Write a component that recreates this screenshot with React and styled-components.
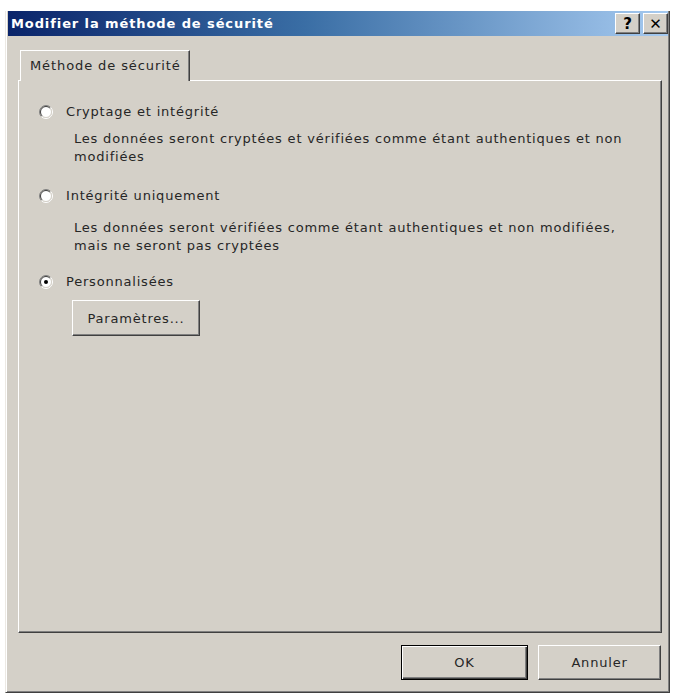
import React from 'react';
import styled, { createGlobalStyle } from 'styled-components';

const Global = createGlobalStyle`
  html, body { margin: 0; padding: 0; background: #ffffff; }
  body { font-family: "DejaVu Sans", "Liberation Sans", sans-serif; }
`;

const Dialog = styled.div`
  margin: 11px 0 0 5px;
  width: 665px;
  height: 682px;
  box-sizing: border-box;
  background: #d4d0c8;
  border-left: 1px solid #ece9e4;
  border-right: 1px solid #404040;
  border-bottom: 1px solid #404040;
  box-shadow: inset 1px 0 #ffffff, inset -1px -1px #808080;
  display: flex;
  flex-direction: column;
  padding: 0 1px 2px 2px;
`;

const TitleBar = styled.div`
  height: 25px;
  flex: none;
  display: flex;
  align-items: center;
  justify-content: space-between;
  padding: 0 0 0 3px;
  background: linear-gradient(90deg, #0a246a 0%, #3a6ea5 45%, #a6caf0 100%);
`;

const Title = styled.span`
  color: #ffffff;
  font-weight: bold;
  font-size: 13px;
  letter-spacing: 0.9px;
`;

const CaptionButtons = styled.div`
  display: flex;
  gap: 3px;
  align-items: center;
`;

const CaptionButton = styled.div`
  width: 25px;
  height: 21px;
  box-sizing: border-box;
  background: #d4d0c8;
  border-top: 1px solid #ffffff;
  border-left: 1px solid #ffffff;
  border-right: 1px solid #404040;
  border-bottom: 1px solid #404040;
  box-shadow: inset -1px -1px #808080;
  display: flex;
  align-items: center;
  justify-content: center;
  font-family: "DejaVu Sans", sans-serif;
  font-weight: bold;
  font-size: 15px;
  color: #000;
`;

const Body = styled.div`
  flex: 1;
  display: flex;
  flex-direction: column;
  padding: 14px 6px 0 10px;
`;

const TabStrip = styled.div`
  height: 30px;
  display: flex;
  align-items: flex-end;
  padding-left: 2px;
  position: relative;
  z-index: 1;
`;

const Tab = styled.div`
  width: 170px;
  height: 31px;
  box-sizing: border-box;
  margin-bottom: -1px;
  background: #d4d0c8;
  border-top: 1px solid #ffffff;
  border-left: 1px solid #ffffff;
  border-right: 1px solid #404040;
  box-shadow: inset -1px 0 #808080;
  padding: 7px 0 0 9px;
  font-size: 13px;
  letter-spacing: 0.9px;
  color: #262626;
`;

const Panel = styled.div`
  height: 553px;
  box-sizing: border-box;
  border-top: 1px solid #ffffff;
  border-left: 1px solid #ffffff;
  border-right: 1px solid #404040;
  border-bottom: 1px solid #404040;
  box-shadow: inset -1px -1px #808080;
  padding: 22px 20px 0 20px;
  display: flex;
  flex-direction: column;
  align-items: flex-start;
`;

const RadioRow = styled.label`
  display: flex;
  align-items: center;
  gap: 13px;
  height: 17px;
  font-size: 13px;
  letter-spacing: 0.8px;
  color: #262626;
  margin-top: ${(p) => p.$mt || 0}px;
`;

const Description = styled.p`
  margin: ${(p) => p.$mt || 0}px 0 0 35px;
  font-size: 13px;
  letter-spacing: 0.8px;
  line-height: 18px;
  color: #262626;
  white-space: nowrap;
`;

const Button = styled.div`
  width: ${(p) => p.$w}px;
  height: ${(p) => p.$h || 35}px;
  box-sizing: border-box;
  background: #d4d0c8;
  border-top: 1px solid ${(p) => (p.$default ? '#000' : '#ffffff')};
  border-left: 1px solid ${(p) => (p.$default ? '#000' : '#ffffff')};
  border-right: 1px solid ${(p) => (p.$default ? '#000' : '#404040')};
  border-bottom: 1px solid ${(p) => (p.$default ? '#000' : '#404040')};
  box-shadow: ${(p) =>
    p.$default
      ? 'inset 1px 1px #ffffff, inset -1px -1px #404040, inset -2px -2px #808080'
      : 'inset -1px -1px #808080'};
  display: flex;
  align-items: center;
  justify-content: center;
  font-size: 13px;
  letter-spacing: 0.8px;
  color: #262626;
  margin: ${(p) => p.$margin || '0'};
`;

const Footer = styled.div`
  display: flex;
  justify-content: flex-end;
  gap: 10px;
  margin-top: 12px;
  padding-right: 1px;
`;

const Radio = ({ checked }) => (
  <svg width="14" height="14" viewBox="0 0 14 14" style={{ flex: 'none' }}>
    <circle cx="7" cy="7" r="5.6" fill="#ffffff" />
    <path d="M2.4 11.6 A6.5 6.5 0 0 1 11.6 2.4" stroke="#808080" strokeWidth="1" fill="none" />
    <path d="M11.6 2.4 A6.5 6.5 0 0 1 2.4 11.6" stroke="#ffffff" strokeWidth="1" fill="none" />
    <path d="M3.1 10.9 A5.5 5.5 0 0 1 10.9 3.1" stroke="#404040" strokeWidth="1" fill="none" />
    <path d="M10.9 3.1 A5.5 5.5 0 0 1 3.1 10.9" stroke="#d4d0c8" strokeWidth="1" fill="none" />
    {checked && <circle cx="7" cy="7" r="2" fill="#000" />}
  </svg>
);

export default function App() {
  return (
    <>
      <Global />
      <Dialog>
        <TitleBar>
          <Title>Modifier la méthode de sécurité</Title>
          <CaptionButtons>
            <CaptionButton>?</CaptionButton>
            <CaptionButton>✕</CaptionButton>
          </CaptionButtons>
        </TitleBar>
        <Body>
          <TabStrip>
            <Tab>Méthode de sécurité</Tab>
          </TabStrip>
          <Panel>
            <RadioRow>
              <Radio />
              Cryptage et intégrité
            </RadioRow>
            <Description $mt={10}>
              Les données seront cryptées et vérifiées comme étant authentiques et non
              <br />
              modifiées
            </Description>
            <RadioRow $mt={21}>
              <Radio />
              Intégrité uniquement
            </RadioRow>
            <Description $mt={15}>
              Les données seront vérifiées comme étant authentiques et non modifiées,
              <br />
              mais ne seront pas cryptées
            </Description>
            <RadioRow $mt={18}>
              <Radio checked />
              Personnalisées
            </RadioRow>
            <Button $w={128} $h={36} $margin="10px 0 0 33px">
              Paramètres...
            </Button>
          </Panel>
          <Footer>
            <Button $w={127} $default>
              OK
            </Button>
            <Button $w={123}>Annuler</Button>
          </Footer>
        </Body>
      </Dialog>
    </>
  );
}
